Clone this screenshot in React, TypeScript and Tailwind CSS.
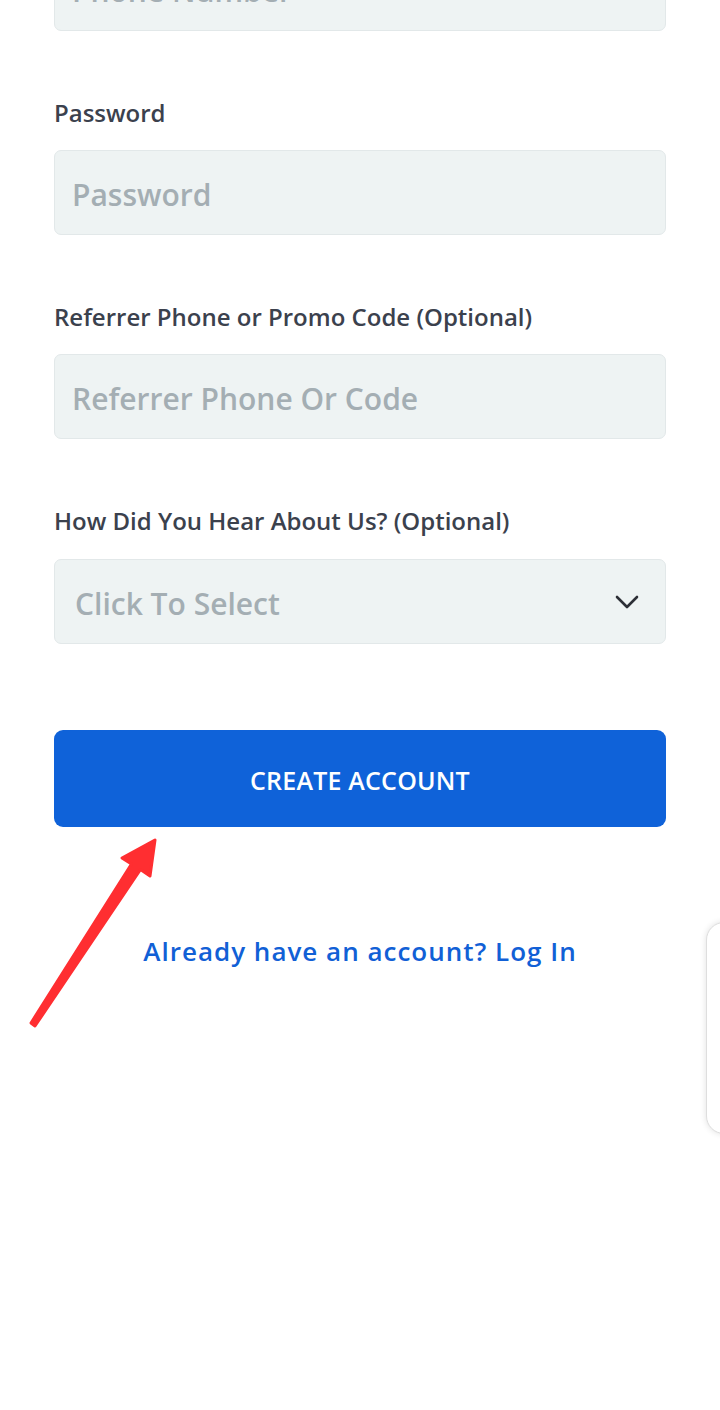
import React from 'react';

const labelCls = "block font-['Open_Sans',sans-serif] text-[24px] font-semibold leading-[24px] text-[#3b414d] mb-[25px]";
const inputCls =
    "w-full h-[85px] rounded-[7px] border border-[#e2e8e9] bg-[#eef3f3] px-[17px] pt-[4px] font-['Open_Sans',sans-serif] text-[30px] font-semibold text-[#3b414d] placeholder:text-[#a4aeb3] outline-none";

const Field: React.FC<{ label?: string; placeholder: string; type?: string }> = ({ label, placeholder, type = 'text' }) => {
    return (
        <div className="flex flex-col">
            {label && <label className={labelCls}>{label}</label>}
            <input type={type} placeholder={placeholder} className={inputCls} />
        </div>
    );
};

const App: React.FC = () => {
    return (
        <div className="relative h-[1410px] w-[720px] overflow-hidden bg-white font-['Open_Sans',sans-serif]">
            <div className="mx-[54px] mt-[-54px] flex flex-col gap-[70px]">
                <Field placeholder="Phone Number" />
                <Field label="Password" placeholder="Password" type="password" />
                <Field label="Referrer Phone or Promo Code (Optional)" placeholder="Referrer Phone Or Code" />

                <div className="flex flex-col">
                    <label className={labelCls}>How Did You Hear About Us? (Optional)</label>
                    <button className="mt-[1px] flex h-[85px] w-full items-center justify-between rounded-[7px] border border-[#e2e8e9] bg-[#eef3f3] pl-[20px] pr-[26px]">
                        <span className="pt-[4px] text-[30px] font-semibold text-[#a4aeb3]">Click To Select</span>
                        <svg width="24" height="14" viewBox="0 0 24 14" fill="none">
                            <path d="M2 2l10 10L22 2" stroke="#2c2f36" strokeWidth="2.6" strokeLinecap="round" strokeLinejoin="round" />
                        </svg>
                    </button>
                </div>
            </div>

            <div className="mx-[54px] mt-[86px]">
                <button className="flex h-[97px] w-full items-center justify-center rounded-[9px] bg-[#0f62d9] pt-[5px] text-[25px] font-semibold tracking-[0.2px] text-white">
                    CREATE ACCOUNT
                </button>
            </div>

            <p className="mt-[107px] text-center text-[26px] font-semibold leading-[35px] tracking-[1px] text-[#1160d6]">
                Already have an account? Log In
            </p>

            {/* floating card peeking in from the right */}
            <div className="absolute left-[706px] top-[922px] h-[212px] w-[60px] rounded-[18px] border border-[#dedede] bg-white shadow-[0_0_6px_rgba(0,0,0,0.12)]"></div>

            {/* red annotation arrow */}
            <svg className="absolute left-0 top-0 pointer-events-none" width="720" height="1410">
                <polygon
                    points="155,840 150,876 140.5,869.5 35,1026 31,1023 131.5,864 122,858"
                    fill="#ff2e31"
                    stroke="#ff2e31"
                    strokeWidth="3"
                    strokeLinejoin="round"
                />
            </svg>
        </div>
    );
};

export default App;
